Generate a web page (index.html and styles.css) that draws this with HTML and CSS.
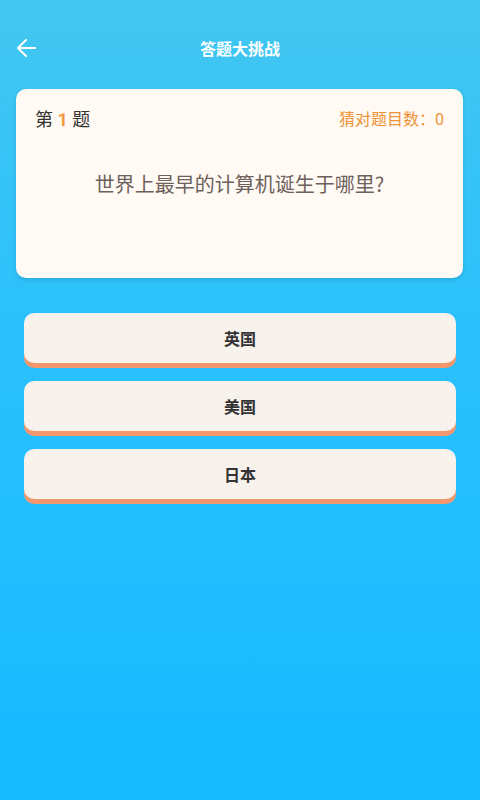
FILE: index.html
```html
<!DOCTYPE html>
<html>
<head>
    <meta charset="utf-8">
    <title>答题大挑战</title>
    <link rel="stylesheet" href="styles.css">
</head>
<body>
    <!-- ヘッダー -->
    <div class="header">
        <span class="back">
            <svg width="22" height="20" viewBox="0 0 22 20">
                <path d="M20 10H3M11 2L3 10l8 8" fill="none" stroke="#fff" stroke-width="2" stroke-linecap="round" stroke-linejoin="round"/>
            </svg>
        </span>
        <h1>答题大挑战</h1>
    </div>

    <!-- 問題カード -->
    <div class="card">
        <div class="card-top">
            <span class="num">第 <b>1</b> 题</span>
            <span class="score">猜对题目数：0</span>
        </div>
        <p class="question">世界上最早的计算机诞生于哪里?</p>
    </div>

    <!-- 選択肢 -->
    <div class="options">
        <button class="option">英国</button>
        <button class="option">美国</button>
        <button class="option">日本</button>
    </div>
</body>
</html>
```

FILE: styles.css
```css
html {
    min-height: 100%;
    background: linear-gradient(#43c6f0 0%, #2bc1fc 40%, #1fbdff 75%, #14b9ff 100%);
}
body {
    margin: 0;
    padding: 0;
    min-height: 800px;
    font-family: Roboto, "Noto Sans CJK SC", sans-serif;
}
.header {
    margin-top: 20px;
    height: 56px;
    display: flex;
    align-items: center;
    justify-content: center;
    position: relative;
}
.back {
    position: absolute;
    left: 15px;
    top: 18px;
    display: flex;
}
h1 {
    margin: 0;
    font-size: 16px;
    font-weight: bold;
    color: #fff;
}
.card {
    margin: 13px 17px 0 16px;
    height: 189px;
    box-sizing: border-box;
    padding: 17px 19px;
    background-color: #fffaf4;
    border-radius: 10px;
    box-shadow: 0 2px 4px rgba(0, 0, 0, 0.12);
}
.card-top {
    display: flex;
    justify-content: space-between;
    align-items: center;
    height: 24px;
}
.num {
    font-size: 18px;
    color: #333;
}
.num b {
    font-weight: bold;
    color: #f39a3c;
}
.score {
    font-size: 16px;
    color: #ee9336;
}
.question {
    margin: 40px 0 0;
    text-align: center;
    font-family: "Noto Sans CJK SC", sans-serif;
    font-size: 20px;
    line-height: 28px;
    color: #6e605b;
}
.options {
    margin: 35px 24px 0;
    display: flex;
    flex-direction: column;
    gap: 18px;
}
.option {
    height: 50px;
    border: none;
    border-radius: 10px;
    background-color: #f8f2ec;
    box-shadow: 0 5px 0 #f5976e;
    font-family: Roboto, "Noto Sans CJK SC", sans-serif;
    font-size: 16px;
    font-weight: bold;
    color: #333;
    cursor: pointer;
}
```
